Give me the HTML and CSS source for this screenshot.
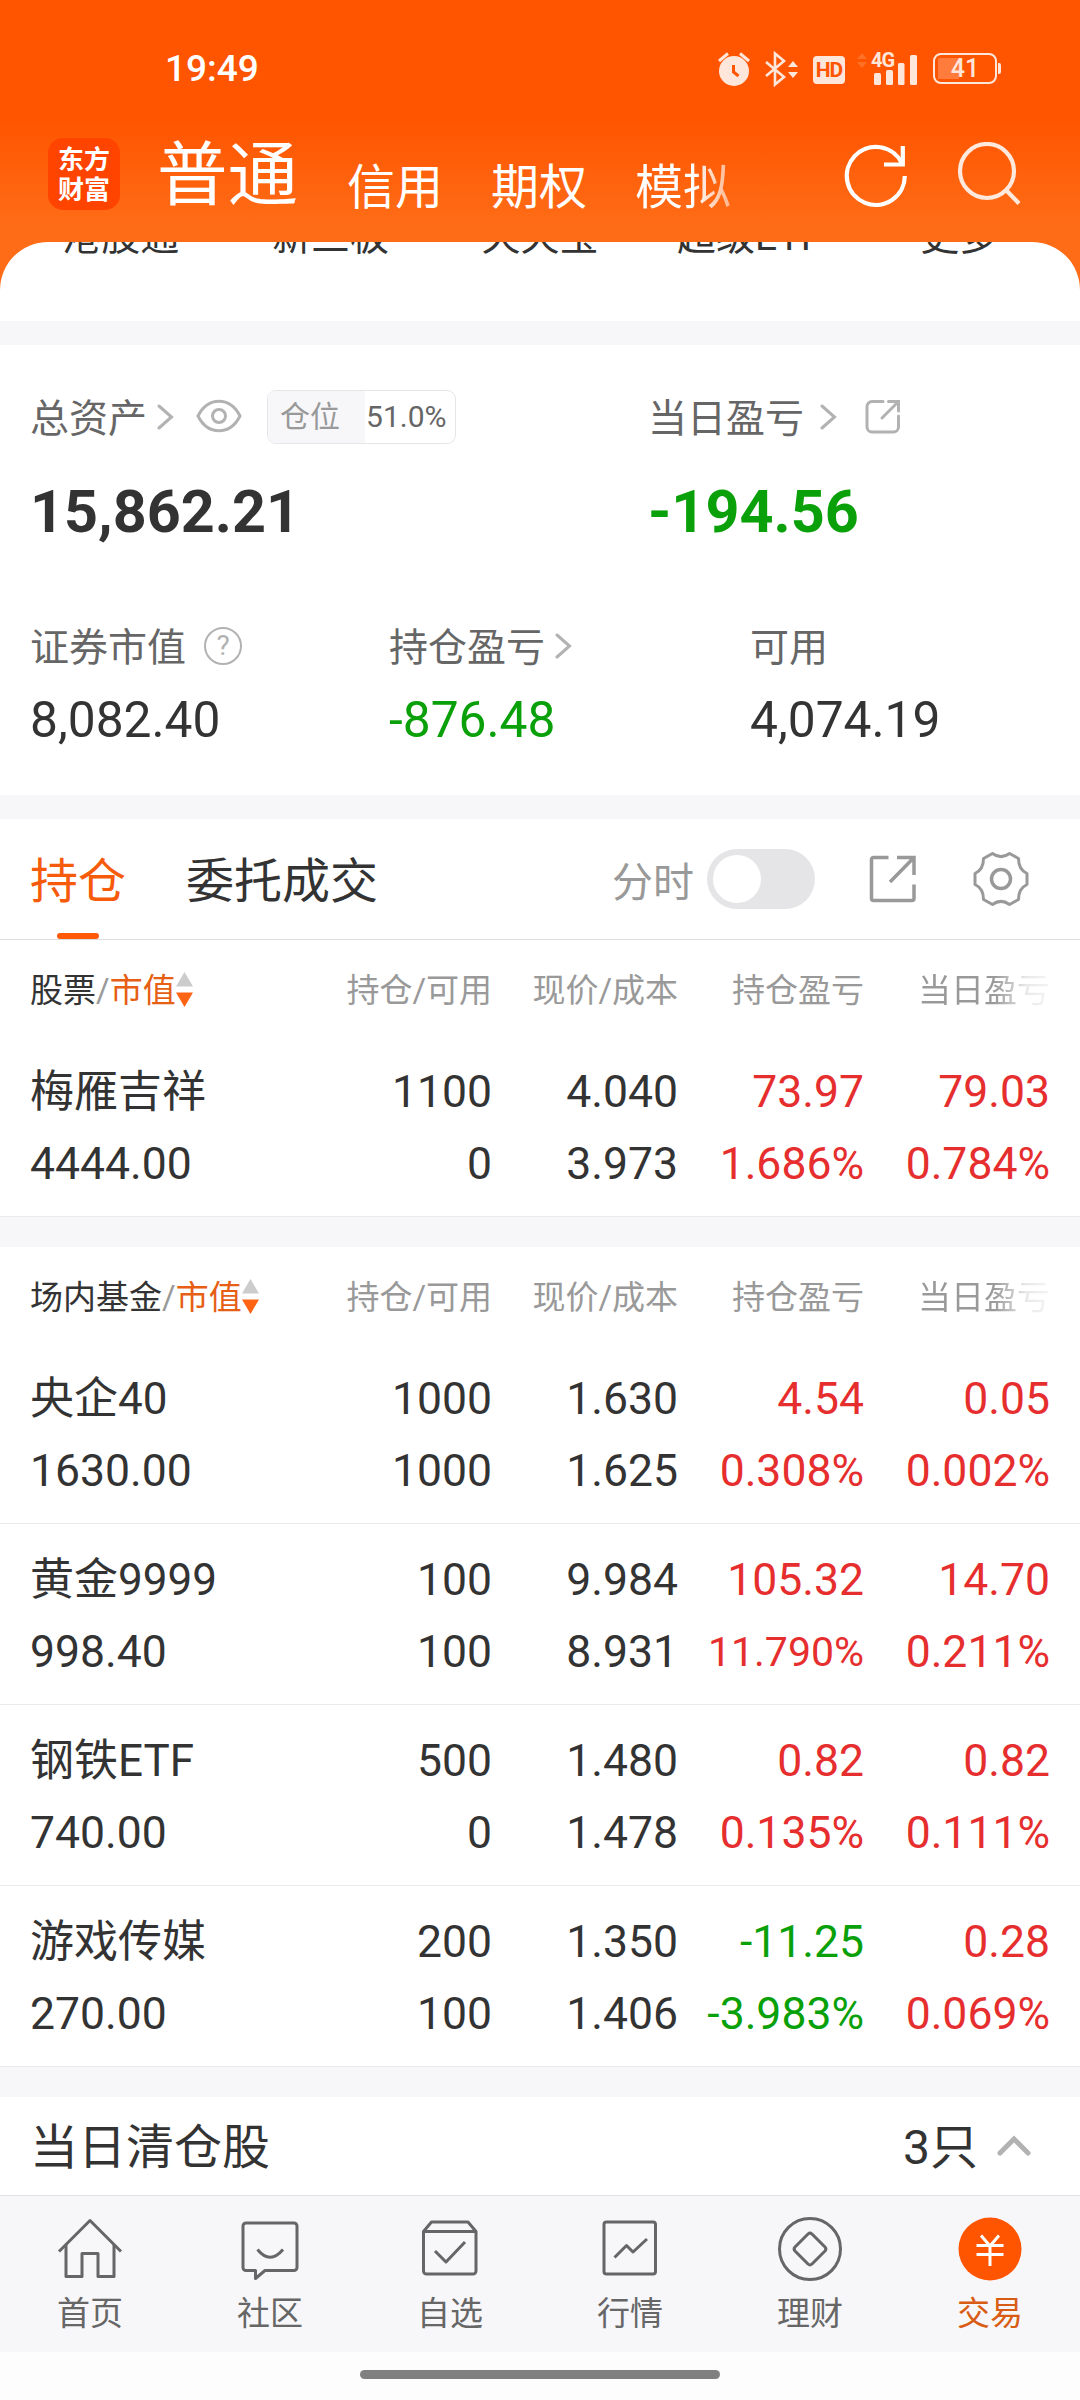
FILE: index.html
```html
<!DOCTYPE html>
<html lang="zh-CN">
<head>
<meta charset="utf-8">
<title>交易</title>
<link rel="stylesheet" href="styles.css">
</head>
<body>
<header class="top">
  <div class="status">
    <span class="clock">19:49</span>
    <div class="status-icons">
      <svg width="32" height="36" viewBox="0 0 32 36" fill="none" stroke="#ffe6da" stroke-width="3"><circle cx="16" cy="20" r="15" fill="#ffe6da" stroke="none"/><path d="M1 10 10 2.500M31 10 22 2.500"/><path d="M15.500 14v7l5 4" stroke="#ff5500"/></svg>
      <svg class="bt" width="34" height="36" viewBox="0 0 34 36" fill="none" stroke="#ffe6da" stroke-width="2.600"><path d="M1 11 19 26 10 33.500V2.500L19 10 1 25"/><path d="M23 16l5-6 5 6zM23 21l5 6 5-6z" fill="#ffe6da" stroke="none"/></svg>
      <span class="hd">HD</span>
      <div class="signal">
        <svg width="62" height="36" viewBox="0 0 62 36" fill="#ffe6da"><path d="M0 8l5-6 5 6zM0 11l5 6 5-6z" fill="#ff7126"/><rect x="17" y="22" width="7" height="12" rx="1.500"/><rect x="29" y="19" width="7" height="15" rx="1.500"/><rect x="41" y="12" width="6.500" height="22" rx="1.500"/><rect x="53" y="4" width="7" height="30" rx="1.500"/></svg>
        <span class="net">4G</span>
      </div>
      <div class="battery"><span>41</span></div>
    </div>
  </div>
  <div class="account-bar">
    <div class="logo"><span>东方</span><span>财富</span></div>
    <nav class="accounts"><b>普通</b><span>信用</span><span>期权</span><span class="fade">模拟</span></nav>
    <svg class="refresh" width="66" height="66" viewBox="0 0 66 66" fill="none" stroke="#fff" stroke-width="4.200"><path d="M61.800 34A29 29 0 1 1 59 21.500"/><path d="M59.800 4V22.500H41"/></svg>
    <svg class="search" width="66" height="66" viewBox="0 0 66 66" fill="none" stroke="#ffe8dc" stroke-width="4.200"><circle cx="30" cy="29" r="27"/><path d="M49 48 62 61.500"/></svg>
  </div>
</header>

<section class="shortcuts"><div class="shortcut-row"><span>港股通</span><span>新三板</span><span>天天宝</span><span>超级ETF</span><span>更多</span></div></section>

<section class="summary">
  <div class="row main">
    <div class="cell">
      <div class="label"><span>总资产</span>
        <svg class="chev" width="17" height="28" viewBox="0 0 17 28"><path d="M2 3 14.500 14 2 25"/></svg>
        <svg class="eye" width="46" height="34" viewBox="0 0 46 34"><path d="M2 17C12-2.700 34-2.700 44 17 34 36.700 12 36.700 2 17Z"/><circle cx="23" cy="17" r="6.500"/></svg>
        <div class="pill"><i>仓位</i><em>51.0%</em></div>
      </div>
      <div class="big">15,862.21</div>
    </div>
    <div class="cell">
      <div class="label"><span>当日盈亏</span>
        <svg class="chev wide" width="17" height="28" viewBox="0 0 17 28"><path d="M2 3 14.500 14 2 25"/></svg>
        <svg class="share" width="36" height="36" viewBox="0 0 36 36"><path d="M18 2.500H7A5 5 0 0 0 2 7.500V28a5 5 0 0 0 5 5H28.500a5 5 0 0 0 5-5V17M23.500 2.500H33.500V12M33 3 17 19"/></svg>
      </div>
      <div class="big down">-194.56</div>
    </div>
  </div>
  <div class="row sub">
    <div class="cell">
      <div class="label"><span>证券市值</span><i class="help">?</i></div>
      <div class="mid">8,082.40</div>
    </div>
    <div class="cell">
      <div class="label"><span>持仓盈亏</span><svg class="chev" width="17" height="28" viewBox="0 0 17 28"><path d="M2 3 14.500 14 2 25"/></svg></div>
      <div class="mid down">-876.48</div>
    </div>
    <div class="cell">
      <div class="label"><span>可用</span></div>
      <div class="mid">4,074.19</div>
    </div>
  </div>
</section>

<section class="tabs">
  <span class="tab active">持仓</span>
  <span class="tab">委托成交</span>
  <span class="switch-label">分时</span>
  <span class="switch"></span>
  <svg class="export" width="48" height="48" viewBox="0 0 48 48"><path d="M19.500 2.500H4.500a2 2 0 0 0-2 2V43.500a2 2 0 0 0 2 2H43a2 2 0 0 0 2-2V29.500M28 2.500H45V20M44.500 3 21 27"/></svg>
  <svg class="gear" width="56" height="56" viewBox="0 0 56 56"><path d="M19.500 2.500Q28 8.800 36.500 2.500L45.500 7.500Q45.500 18.500 54 22.500V33.500Q45.500 37.500 45.500 48.500L36.500 53.500Q28 47.200 19.500 53.500L10.500 48.500Q10.500 37.500 2 33.500V22.500Q10.500 18.500 10.500 7.500Z"/><circle cx="28" cy="28" r="9.500"/></svg>
</section>

<section class="table">
  <div class="thead"><span class="key"><b>股票</b>/<em>市值</em><svg width="17" height="36" viewBox="0 0 17 36"><path d="M8.500 0 17 14.500H0z" fill="#ccc"/><path d="M0 20.500H17L8.500 35z" fill="#ff6414"/></svg></span><span>持仓/可用</span><span>现价/成本</span><span>持仓盈亏</span><span class="cut">当日盈亏</span></div>
  <div class="tr"><span>梅雁吉祥</span><span>1100</span><span>4.040</span><span class="up">73.97</span><span class="up">79.03</span><span>4444.00</span><span>0</span><span>3.973</span><span class="up">1.686%</span><span class="up">0.784%</span></div>
</section>

<section class="table">
  <div class="thead"><span class="key"><b>场内基金</b>/<em>市值</em><svg width="17" height="36" viewBox="0 0 17 36"><path d="M8.500 0 17 14.500H0z" fill="#ccc"/><path d="M0 20.500H17L8.500 35z" fill="#ff6414"/></svg></span><span>持仓/可用</span><span>现价/成本</span><span>持仓盈亏</span><span class="cut">当日盈亏</span></div>
  <div class="tr"><span>央企40</span><span>1000</span><span>1.630</span><span class="up">4.54</span><span class="up">0.05</span><span>1630.00</span><span>1000</span><span>1.625</span><span class="up">0.308%</span><span class="up">0.002%</span></div>
  <div class="tr"><span>黄金9999</span><span>100</span><span>9.984</span><span class="up">105.32</span><span class="up">14.70</span><span>998.40</span><span>100</span><span>8.931</span><span class="up tight">11.790%</span><span class="up">0.211%</span></div>
  <div class="tr"><span>钢铁ETF</span><span>500</span><span>1.480</span><span class="up">0.82</span><span class="up">0.82</span><span>740.00</span><span>0</span><span>1.478</span><span class="up">0.135%</span><span class="up">0.111%</span></div>
  <div class="tr"><span>游戏传媒</span><span>200</span><span>1.350</span><span class="down">-11.25</span><span class="up">0.28</span><span>270.00</span><span>100</span><span>1.406</span><span class="down">-3.983%</span><span class="up">0.069%</span></div>
</section>

<section class="cleared"><h2>当日清仓股</h2><span>3只</span><svg width="34" height="22" viewBox="0 0 34 22"><path d="M3 18 17 4 31 18"/></svg></section>

<nav class="bottom">
  <a><svg width="66" height="66" viewBox="0 0 66 66"><path d="M2 35.500 33 4.500 64 35.500"/><path d="M9 29V60.500H25V37.500H41V60.500H57V29"/></svg><span>首页</span></a>
  <a><svg width="66" height="66" viewBox="0 0 66 66"><path d="M9 7H57a3 3 0 0 1 3 3V51.500a3 3 0 0 1-3 3H28L18.500 62.500V54.500H9a3 3 0 0 1-3-3V10a3 3 0 0 1 3-3Z"/><path d="M20.500 33.500Q33 49 46 33.500"/></svg><span>社区</span></a>
  <a><svg width="66" height="66" viewBox="0 0 66 66"><path d="M6.500 15.500 14.500 6H51L59 15.500V55a3 3 0 0 1-3 3H9.500a3 3 0 0 1-3-3ZM6.500 15.500H59M18 35 29 46 48 26"/></svg><span>自选</span></a>
  <a><svg width="66" height="66" viewBox="0 0 66 66"><rect x="7" y="6" width="51.500" height="52" rx="2.500"/><path d="M17.500 41.500 29.500 29.500 36 36 50 23"/></svg><span>行情</span></a>
  <a><svg width="66" height="66" viewBox="0 0 66 66"><circle cx="33" cy="33" r="30.500"/><path d="M31 18 18 31a3 3 0 0 0 0 4L31 48a3 3 0 0 0 4 0L48 35a3 3 0 0 0 0-4L35 18a3 3 0 0 0-4 0Z"/></svg><span>理财</span></a>
  <a class="on"><svg width="66" height="66" viewBox="0 0 66 66"><circle cx="33" cy="33" r="31.500" fill="#ff5500" stroke="none"/><path d="M24 19.500 33 30 42 19.500M19.500 29.500H46.500M19.500 38.500H46.500M33 30V50" stroke="#fff"/></svg><span>交易</span></a>
</nav>
<div class="gesture"></div>
</body>
</html>
```
FILE: styles.css
```css
* { box-sizing: border-box; }
body {
  margin: 0;
  width: 1080px;
  height: 2400px;
  overflow: hidden;
  background: #f7f7fa;
  color: #333;
  font-family: Roboto, "Noto Sans CJK SC", sans-serif;
  display: flex;
  flex-direction: column;
}
b, em, i, h2 { font-weight: inherit; font-style: normal; }
svg { display: block; flex: none; }

/* orange header; the white sheet below overlaps its bottom edge */
.top {
  height: 300px;
  margin-bottom: -58px;
  flex: none;
  color: #fff;
  background: linear-gradient(#ff5500 0, #ff5500 120px, #ff6c17 225px, #ff6c17 100%);
}
.status { height: 138px; padding: 0 80px 0 165px; display: flex; justify-content: space-between; }
.clock { font-size: 37px; font-weight: 500; line-height: 44px; padding-top: 47px; }
.status-icons { display: flex; padding-top: 51px; height: 87px; color: #ffe6da; }
.bt { margin-left: 15px; }
.hd {
  width: 32px; height: 28px; margin: 5px 0 0 14px; border-radius: 4px;
  background: #ffe6da; color: #ff5500;
  font-size: 21px; font-weight: 700; line-height: 28px; text-align: center; letter-spacing: -1px;
}
.signal { position: relative; margin-left: 12px; }
.net { position: absolute; left: 14px; top: -1px; font-size: 20px; font-weight: 700; line-height: 20px; letter-spacing: -1px; }
.battery {
  position: relative; width: 64px; height: 31px; margin: 2px 3px 0 14px;
  border: 2px solid #ffe6da; border-radius: 8px;
  background: linear-gradient(#ff7c3c, #ff7c3c) 3px 3px / 21px 21px no-repeat;
  font-size: 25px; font-weight: 500; line-height: 28px; text-align: center;
}
.battery::after {
  content: ""; position: absolute; right: -6px; top: 8px; width: 3px; height: 11px;
  background: #ffe6da; border-radius: 0 2px 2px 0;
}
.account-bar { display: flex; padding-left: 48px; height: 104px; }
.logo {
  width: 72px; height: 72px; border-radius: 15px; background: #ff4400;
  display: flex; flex-direction: column; align-items: center; padding-top: 5px;
  font: 700 26px/30px "Noto Sans CJK SC", sans-serif;
}
.accounts { display: flex; align-items: flex-start; margin-left: 37px; width: 575px; font-size: 48px; line-height: 72px; white-space: nowrap; }
.accounts b { font-size: 70.500px; margin: 2px 49px 0 0; }
.accounts span { margin: 14px 48px 0 0; }
.accounts .fade {
  background: linear-gradient(90deg, #fff 60%, #ffb48c 100%);
  background-clip: text; color: transparent;
}
.refresh { margin: 4px 0 0 111px; }
.search { margin: 4px 0 0 48px; }

.shortcuts {
  position: relative; height: 79px; flex: none; background: #fff;
  border-radius: 48px 48px 0 0; overflow: hidden; padding: 0 16px;
}
.shortcut-row { display: grid; grid-template-columns: repeat(5, 1fr); margin-top: -30px; text-align: center; font-size: 39px; line-height: 50px; }

.summary { margin-top: 24px; height: 450px; flex: none; background: #fff; padding: 45px 0 0 30px; }
.row { display: grid; }
.main { grid-template-columns: 618px 1fr; height: 239px; }
.sub { grid-template-columns: 359px 361px 1fr; margin-top: -10px; }
.label { display: flex; align-items: center; height: 54px; font-size: 39px; line-height: 54px; color: #666; white-space: nowrap; }
.label span { padding-top: 3px; }
.label svg { fill: none; stroke: #b2b2b2; stroke-width: 3; stroke-linecap: round; }
.chev { margin-left: 10px; }
.chev.wide { margin-left: 16px; }
.eye { margin-left: 22px; margin-top: -2px; }
.share { margin-left: 28px; }
.pill {
  margin-left: 25px; width: 189px; height: 54px; border: 1px solid #e6e6e8; border-radius: 9px;
  display: flex; overflow: hidden; font-size: 30px; line-height: 52px;
}
.pill i { width: 97px; padding-left: 12px; background: #f7f7fa; color: #999; }
.pill em { padding-left: 1px; }
.big { margin-top: 32px; font-size: 59.300px; font-weight: 700; line-height: 72px; }
.mid { margin-top: 17px; font-size: 49.700px; line-height: 60px; }
.up { color: #e62e2e; }
.down { color: #09a009; }
.help {
  margin-left: 18px; width: 38px; height: 38px; border: 2.500px solid #b2b2b2; border-radius: 50%;
  color: #b2b2b2; font-size: 28px; line-height: 34px; text-align: center;
}

.tabs { margin-top: 24px; height: 121px; flex: none; background: #fff; border-bottom: 1px solid #ddd; display: flex; align-items: center; padding-left: 30px; }
.tab { font-size: 48px; line-height: 120px; margin-right: 60px; position: relative; padding-top: 3px; height: 120px; }
.tab.active { color: #f65b0b; }
.tab.active::after { content: ""; position: absolute; left: 27px; bottom: 0; width: 42px; height: 6px; border-radius: 3px; background: #ff5a08; }
.switch-label { margin-left: 174px; font-size: 41px; color: #999; }
.switch { width: 108px; height: 60px; margin-left: 13px; border-radius: 30px; background: #e5e5e7; padding: 6px; }
.switch::before { content: ""; display: block; width: 48px; height: 48px; border-radius: 50%; background: #fff; }
.export, .gear { fill: none; stroke: #999; stroke-width: 3.500; }
.export { margin-left: 54px; }
.gear { margin-left: 56px; stroke-linejoin: round; stroke-width: 3; }
.gear circle { stroke-width: 3.500; }

.table { background: #fff; flex: none; margin-bottom: 30px; }
.thead, .tr { display: grid; grid-template-columns: 282px 180px 186px 186px 186px; padding: 0 30px; }
.thead { height: 96px; line-height: 101px; font-size: 33px; color: #999; text-align: right; white-space: nowrap; }
.key { display: flex; align-items: center; text-align: left; }
.key b { color: #333; }
.key em { color: #e65f14; }
.key svg { margin-left: 0; margin-top: -2px; }
.cut { background: linear-gradient(90deg, #999 70%, #e8e8e8 87%, #f4f4f4 100%); background-clip: text; color: transparent; }
.tr { height: 181px; padding-top: 20px; grid-auto-rows: 72px; line-height: 73px; font-size: 44.500px; text-align: right; border-bottom: 1px solid #eaeaec; white-space: nowrap; }
.tr span:nth-child(5n+1) { text-align: left; }
.tr span:first-child { font-size: 44px; }
.tr .tight { font-size: 41px; }

.cleared { height: 98px; flex: none; background: #fff; display: flex; align-items: center; padding: 3px 49px 0 30px; font-size: 48px; line-height: 96px; }
.cleared h2 { margin: 0; flex: 1; font-size: 48px; }
.cleared svg { margin-left: 19px; margin-top: -4px; fill: none; stroke: #b2b2b2; stroke-width: 5; stroke-linecap: round; }

.bottom { height: 157px; flex: none; border-top: 1px solid #e0e0e2; background: #f7f7fa; display: grid; grid-template-columns: repeat(6, 1fr); }
.bottom a { display: flex; flex-direction: column; align-items: center; padding-top: 20px; font-size: 33px; line-height: 40px; color: #666; }
.bottom svg { fill: none; stroke: #666; stroke-width: 3; stroke-linejoin: round; }
.bottom span { margin-top: 12px; }
.bottom .on { color: #d95c14; }
.gesture { flex: 1; background: #fdfdfd; display: flex; justify-content: center; padding-top: 18px; }
.gesture::before { content: ""; width: 360px; height: 9px; border-radius: 5px; background: #808080; }
```
